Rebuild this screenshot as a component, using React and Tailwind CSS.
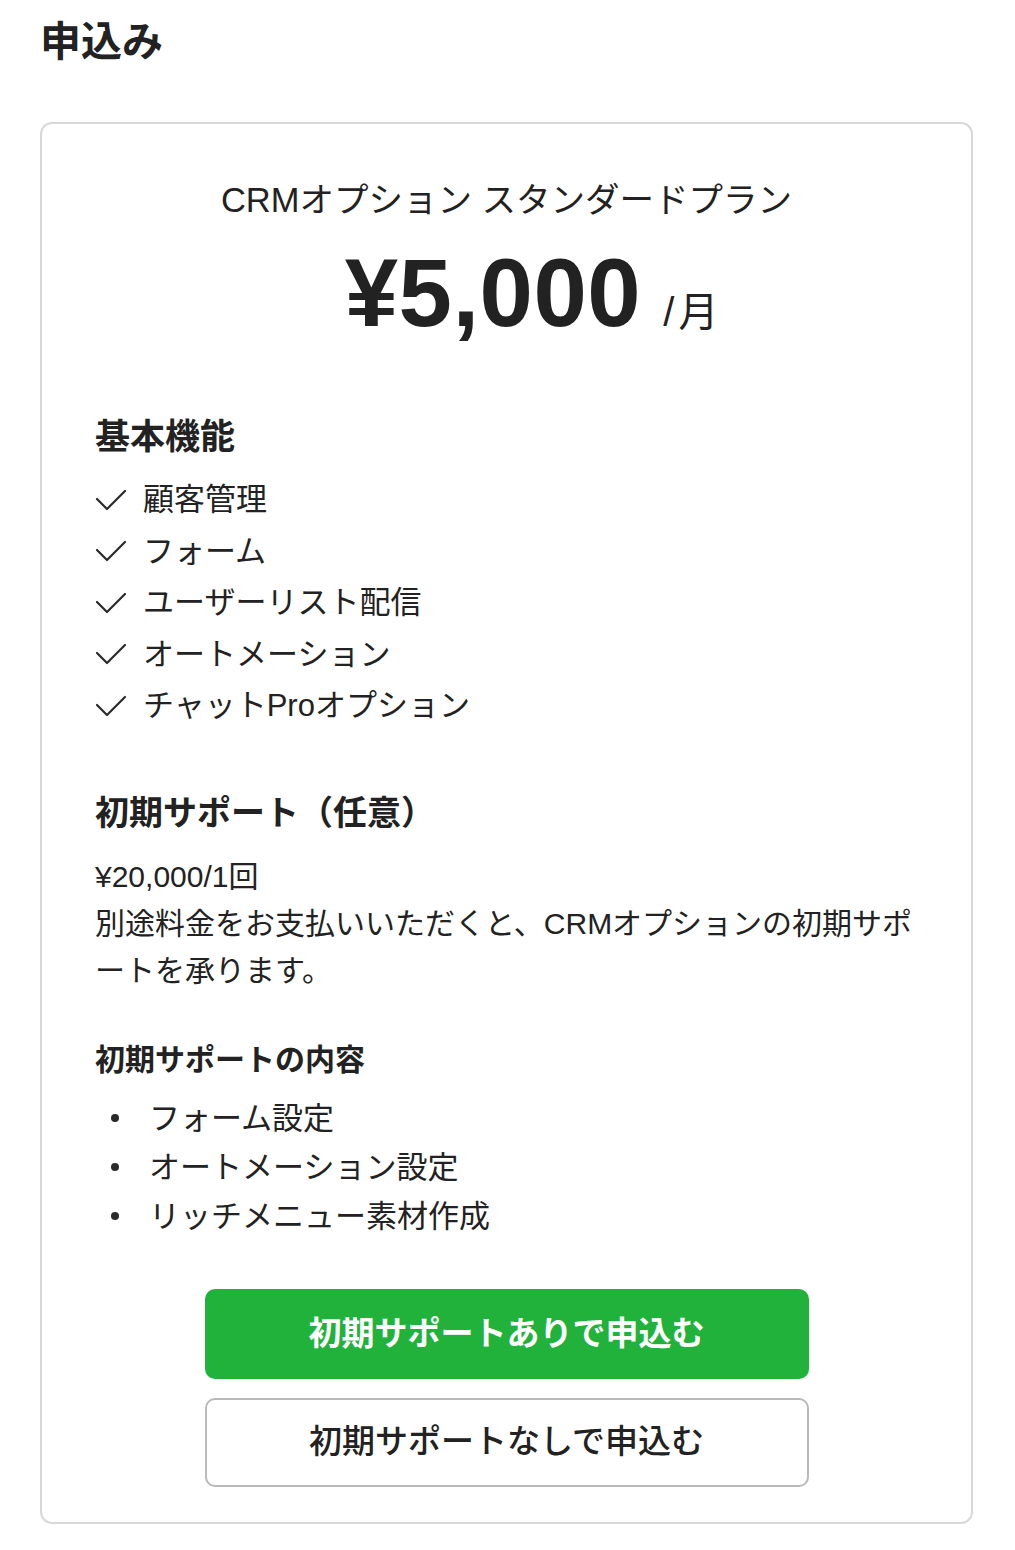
import React from "react";

const features = [
  "顧客管理",
  "フォーム",
  "ユーザーリスト配信",
  "オートメーション",
  "チャットProオプション",
];

const supportItems = ["フォーム設定", "オートメーション設定", "リッチメニュー素材作成"];

const CheckIcon = () => (
  <svg width="32" height="24" viewBox="0 0 32 24" fill="none" className="shrink-0">
    <polyline
      points="2,11 12,21 30,3"
      stroke="#2a2a2a"
      strokeWidth="2.2"
      strokeLinecap="round"
      strokeLinejoin="round"
    />
  </svg>
);

export default function App() {
  return (
    <div
      className="min-h-[1550px] bg-white text-[#222] pb-[27px]"
      style={{ fontFamily: '"Liberation Sans", "Noto Sans CJK JP", sans-serif' }}
    >
      {/* Page title */}
      <h1 className="pt-[12px] pl-[40px] text-[41px] leading-[60px] font-bold">申込み</h1>

      {/* Plan card */}
      <div className="mt-[50px] ml-[40px] w-[933px] border-2 border-[#d8d8d8] rounded-[12px] bg-white px-[53px] pt-[52px] pb-[35px]">
        <p className="text-center text-[34.5px] leading-[48px]">CRMオプション スタンダードプラン</p>

        <div className="mt-[19px] flex items-baseline justify-center pl-[50px]">
          <span className="text-[96px] leading-[100px] font-bold tracking-[0.5px]">¥5,000</span>
          <span className="ml-[22px] text-[40px] leading-[40px]">
            <span className="mr-[4px]">/</span>月
          </span>
        </div>

        {/* Basic features */}
        <h2 className="mt-[69px] text-[35px] leading-[50px] font-bold">基本機能</h2>
        <ul className="mt-[12px]">
          {features.map((f) => (
            <li key={f} className="flex items-center gap-[16px] text-[31px] leading-[51.5px]">
              <CheckIcon />
              <span>{f}</span>
            </li>
          ))}
        </ul>

        {/* Initial support */}
        <h2 className="mt-[56px] text-[34px] leading-[50px] font-bold">初期サポート（任意）</h2>
        <div className="mt-[15px] text-[30px] leading-[47px] whitespace-nowrap">
          <p>¥20,000/1回</p>
          <p>
            別途料金をお支払いいただくと、CRMオプションの初期サポ
            <br />
            ートを承ります。
          </p>
        </div>

        <h3 className="mt-[44px] text-[30px] leading-[44px] font-bold">初期サポートの内容</h3>
        <ul className="mt-[12px]">
          {supportItems.map((s) => (
            <li key={s} className="flex items-center text-[31px] leading-[49px]">
              <span className="ml-[16px] mr-[30px] w-[8px] h-[8px] rounded-full bg-[#2a2a2a] shrink-0" />
              <span>{s}</span>
            </li>
          ))}
        </ul>

        {/* Actions */}
        <div className="mt-[48px] flex flex-col items-center gap-[19px]">
          <button className="w-[604px] h-[90px] rounded-[10px] bg-[#21b23b] text-white text-[33px] font-bold">
            初期サポートありで申込む
          </button>
          <button className="w-[604px] h-[89px] rounded-[10px] border-2 border-[#b9b9b9] bg-white text-[#222] text-[33px] font-medium">
            初期サポートなしで申込む
          </button>
        </div>
      </div>
    </div>
  );
}
